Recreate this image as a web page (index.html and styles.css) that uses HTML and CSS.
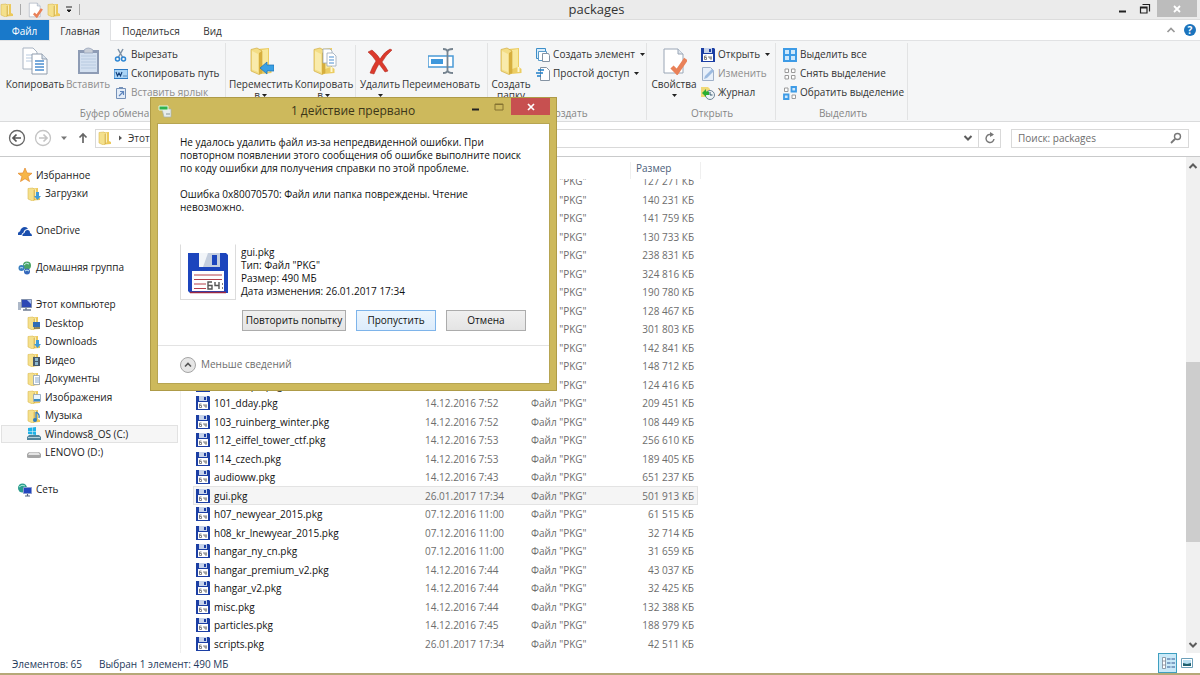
FILE: index.html
```
<!DOCTYPE html>
<html lang="ru">
<head>
<meta charset="utf-8">
<title>packages</title>
<link rel="stylesheet" href="styles.css">
</head>
<body>
<svg class="defs" aria-hidden="true">
  <symbol id="folder" viewBox="0 0 14 14">
    <path d="M5 1.500l6-.5v9l2 1v2l-7 .5z" fill="#ecc95c"/><path d="M1 1.500L6 1l1.500 1.500V13l-2 1L1 12z" fill="#f4e08c" stroke="#dcbb52" stroke-width=".6"/><path d="M7.500 2.500L9 2v9l-1.500 1.500z" fill="#f9efb9"/><path d="M7.200 3v10" stroke="#c99f30" stroke-width=".7"/>
  </symbol>
  <symbol id="bigfolder" viewBox="0 0 26 28">
    <path d="M9 2l12-1v19l2.500 2v4L13 27z" fill="#eccd63"/><path d="M14 3l6-1v18l-6 2z" fill="#f8e89a"/><path d="M3 2.500L9 1l5 3v22l-3 1.500L3 24z" fill="#f3dd85" stroke="#d3ae43" stroke-width=".7"/><path d="M11 6l3-2v22l-3 1.500z" fill="#d6ae3d"/><path d="M4 4l6 3v18l-6-2.500z" fill="#f9ebab"/><path d="M19.500 20h2v5h-2z" fill="#fff6cf"/>
  </symbol>
  <symbol id="floppy" viewBox="0 0 14 14">
    <path d="M0 0h13l1 1v13H0z" fill="#1c3fa4"/><path d="M3 0h8v5H3z" fill="#c7d3ea"/><path d="M8 1h2v3H8z" fill="#1c3fa4"/><path d="M2 6h10v7H2z" fill="#fff"/><path d="M5.500 8H3.500v3.500h2v-2h-2M8 8v2h3M10 8v4" fill="none" stroke="#666" stroke-width=".8"/>
  </symbol>
  <symbol id="check" viewBox="0 0 26 28">
    <path d="M3 2h14l5 5v19H3z" fill="#fff" stroke="#9aa6b6"/><path d="M17 2v5h5" fill="#dfe6ee" stroke="#9aa6b6"/><path d="M11 20l5 5 9-13" fill="none" stroke="#e98158" stroke-width="4.500"/>
  </symbol>
  <symbol id="caret" viewBox="0 0 7 5"><path d="M1 1h5L3.500 4z" fill="#222"/></symbol>
  <symbol id="up" viewBox="0 0 10 10"><path d="M1.500 7L5 3.500 8.500 7" fill="none" stroke="#5c5c5c" stroke-width="2"/></symbol>
  <symbol id="down" viewBox="0 0 10 10"><path d="M1.500 3L5 6.500 8.500 3" fill="none" stroke="#5c5c5c" stroke-width="2"/></symbol>
</svg>

<header class="titlebar">
  <div class="quick">
    <svg class="i14"><use href="#folder"/></svg><i class="bar"></i>
    <button aria-label="Свойства"><svg class="i16"><use href="#check"/></svg></button>
    <button aria-label="Новая папка"><svg class="i14"><use href="#folder"/></svg></button>
    <button aria-label="Настройка панели"><svg class="i8" viewBox="0 0 8 8"><path d="M1 1h6M2 4h4L4 6z" fill="#222" stroke="#222"/></svg></button><i class="bar"></i>
  </div>
  <h1>packages</h1>
  <div class="winbtns">
    <button aria-label="Свернуть"><svg viewBox="0 0 12 12" class="i12"><path d="M3 8.500h7" stroke="#222" stroke-width="2"/></svg></button>
    <button aria-label="Восстановить"><svg viewBox="0 0 12 12" class="i12"><path d="M1.500 4h6.500v6H1.500zM1.500 5H8M3.500 1.500h7v7" fill="none" stroke="#222" stroke-width="1.200"/></svg></button>
    <button class="close" aria-label="Закрыть"><svg viewBox="0 0 12 12" class="i12"><path d="M3 3l6 6M9 3L3 9" stroke="#fff" stroke-width="1.800"/></svg></button>
  </div>
</header>

<nav class="tabs">
  <button class="file">Файл</button><button class="active">Главная</button><button class="t3">Поделиться</button><button class="t4">Вид</button>
  <div class="tabend">
    <button aria-label="Свернуть ленту"><svg class="i10" viewBox="0 0 10 10"><path d="M1.500 7L5 3.500 8.500 7" fill="none" stroke="#999" stroke-width="1.700"/></svg></button>
    <button aria-label="Справка" class="help">?</button>
  </div>
</nav>

<section class="ribbon">
  <div class="group clip">
    <div class="tools">
      <button class="big w62"><svg class="ico" viewBox="0 0 26 28"><path d="M1 1h10l4 4v17H1z" fill="#fff" stroke="#a9b4c2"/><path d="M4 8h6M4 11h6M4 14h6" stroke="#b9cbe0"/><path d="M10 7h10l5 5v15H10z" fill="#fff" stroke="#8f9cad"/><path d="M20 7v5h5" fill="#dbe4ee" stroke="#8f9cad"/><path d="M13 14h9M13 17h9M13 20h9M13 23h9" stroke="#4c8fd0" stroke-width="1.400"/></svg><span>Копировать</span></button>
      <button class="big w44 dim"><svg class="ico" viewBox="0 0 26 28"><path d="M3 3h21v24H3z" fill="#8e9cb5"/><path d="M5 6h17v19H5z" fill="#d3e0f0"/><path d="M6 9h15M6 12h15M6 15h15M6 18h15M6 21h15" stroke="#b3c5dc" stroke-width=".8"/><path d="M9 3q4-4 9 0v3H9z" fill="#c8ced8" stroke="#8e9cb5" stroke-width=".7"/></svg><span>Вставить</span></button>
      <div class="small">
        <button><svg class="i14" viewBox="0 0 14 14"><path d="M4 1l5 9M9 1L4 10" stroke="#7e91a6" stroke-width="1.500"/><circle cx="3.500" cy="11" r="2" fill="none" stroke="#2d86d4" stroke-width="1.500"/><circle cx="9.500" cy="11" r="2" fill="none" stroke="#2d86d4" stroke-width="1.500"/></svg>Вырезать</button>
        <button><svg class="i14" viewBox="0 0 14 14"><path d="M0 2.500h14v9H0z" fill="#a9d4f7" stroke="#2b78c2"/><path d="M2 5l1.500 4L5 6l1.500 3L8 5M9.500 9h1M11.500 9h1" stroke="#123d77" fill="none" stroke-width="1.100"/></svg>Скопировать путь</button>
        <button class="dim"><svg class="i14" viewBox="0 0 14 14"><path d="M2.500 2.500h9v10h-9z" fill="#e4edf8" stroke="#7591b8"/><path d="M5 1h4v2H5z" fill="#7591b8"/><path d="M5 10l4-4M6 5.500h3.500V9" fill="none" stroke="#5f86bd" stroke-width="1.200"/></svg>Вставить ярлык</button>
      </div>
    </div>
    <h2>Буфер обмена</h2>
  </div>
  <div class="group org">
    <div class="tools">
      <button class="big w68"><svg class="ico" viewBox="0 0 26 28"><use href="#bigfolder" width="26" height="28"/><path d="M12 21l7-6v3h7v6h-7v3z" fill="#39a0e4" stroke="#1b6eb2" stroke-width=".7"/></svg><span>Переместить</span><span>в <svg class="car"><use href="#caret"/></svg></span></button>
      <button class="big w58"><svg class="ico" viewBox="0 0 26 28"><use href="#bigfolder" width="26" height="28"/><path d="M12 2h7l2 2v12h-9z" fill="#fff" stroke="#9ba8b8" stroke-width=".8"/><path d="M16 6h6l3 3v10h-9z" fill="#fff" stroke="#9ba8b8" stroke-width=".8"/><path d="M18 10h5M18 13h5M18 16h5" stroke="#4c8fd0"/></svg><span>Копировать</span><span>в <svg class="car"><use href="#caret"/></svg></span></button>
      <i class="split"></i>
      <button class="big w44"><svg class="ico" viewBox="0 0 26 28"><path d="M1 5l4-2q6 5 8 9 4-7 10-10l2 1q-6 5-10 12 4 5 6 9l-3 1q-3-4-6-8-3 5-5 10l-4-1q2-6 6-12-3-5-8-9z" fill="#dc3a2c" stroke="#a9271d" stroke-width=".5"/></svg><span>Удалить</span><span><svg class="car"><use href="#caret"/></svg></span></button>
      <button class="big w78"><svg class="ico" viewBox="0 0 26 28"><path d="M0 9h25v11H0z" fill="#fff" stroke="#4b9ad6" stroke-width="1.500"/><path d="M3 12h12v5H3z" fill="#3f98dc"/><path d="M15 2q4.500 0 4.500 3v18q0 3-4.500 3M25 2q-5.500 0-5.500 3v18q0 3 5.500 3" fill="none" stroke="#75838f" stroke-width="1.800"/></svg><span>Переименовать</span></button>
    </div>
    <h2>Упорядочить</h2>
  </div>
  <div class="group new">
    <div class="tools">
      <button class="big w44"><svg class="ico"><use href="#bigfolder"/></svg><span>Создать</span><span>папку</span></button>
      <div class="small">
        <button><svg class="i14" viewBox="0 0 14 14"><path d="M.5.5h9v10h-9z" fill="#d9edfb" stroke="#3c8ec9"/><path d="M2.500 3.500h8v9h-8z" fill="#fff" stroke="#5a9bc9"/><path d="M6.500 5.500h6l1 2v6h-7z" fill="#fff" stroke="#8593a3"/></svg>Создать элемент<svg class="car"><use href="#caret"/></svg></button>
        <button><svg class="i14" viewBox="0 0 14 14"><path d="M4.500.5h6l3 3v10h-9z" fill="#fff" stroke="#8593a3"/><path d="M2 3h6M0 6h7M1 9h4" stroke="#1f7fc9" stroke-width="1.400"/></svg>Простой доступ<svg class="car"><use href="#caret"/></svg></button>
      </div>
    </div>
    <h2>Создать</h2>
  </div>
  <div class="group open">
    <div class="tools">
      <button class="big w50"><svg class="ico"><use href="#check"/></svg><span>Свойства</span><span><svg class="car"><use href="#caret"/></svg></span></button>
      <div class="small">
        <button><svg class="i14"><use href="#floppy"/></svg>Открыть<svg class="car"><use href="#caret"/></svg></button>
        <button class="dim"><svg class="i14" viewBox="0 0 14 14"><path d="M1.500.5h8l3 3v10h-11z" fill="#e8f0fa" stroke="#9fb0c8"/><path d="M3 12l1-3 7-7 2 2-7 7z" fill="#9dbbe0"/></svg>Изменить</button>
        <button><svg class="i14" viewBox="0 0 14 14"><path d="M0 1h7l2 2v8H0z" fill="#f0d977"/><circle cx="9" cy="9" r="4.500" fill="#eef4f6" stroke="#6e8496"/><path d="M9 6v3h2.500" fill="none" stroke="#35566e"/><path d="M1 7l4-4v2.500h3V9H5v2z" fill="#2bae33"/></svg>Журнал</button>
      </div>
    </div>
    <h2>Открыть</h2>
  </div>
  <div class="group sel">
    <div class="tools">
      <div class="small">
        <button><svg class="i14" viewBox="0 0 14 14"><path d="M0 0h14v14H0z" fill="#3d9be6"/><path d="M2 2h4v4H2zM8 2h4v4H8zM2 8h4v4H2zM8 8h4v4H8z" fill="#cfe8fb"/></svg>Выделить все</button>
        <button><svg class="i14" viewBox="0 0 14 14"><path d="M2 2h3.500v3.500H2zM8.500 2H12v3.500H8.500zM2 8.500h3.500V12H2zM8.500 8.500H12V12H8.500z" fill="#fff" stroke="#9a9a9a"/></svg>Снять выделение</button>
        <button><svg class="i14" viewBox="0 0 14 14"><path d="M8.500 1H13v4.500H8.500zM1 8.500h4.500V13H1z" fill="#cfe8fb" stroke="#3d9be6" stroke-width="1.800"/><path d="M1.500 2H5v3.500H1.500zM9 9h3.500v3.500H9z" fill="#fff" stroke="#9a9a9a"/></svg>Обратить выделение</button>
      </div>
    </div>
    <h2>Выделить</h2>
  </div>
</section>

<section class="address">
  <button aria-label="Назад"><svg class="i18" viewBox="0 0 18 18"><circle cx="9" cy="9" r="7.500" fill="#fff" stroke="#666" stroke-width="1.300"/><path d="M13 9H6M8.500 5.500L5 9l3.500 3.500" fill="none" stroke="#555" stroke-width="1.700"/></svg></button>
  <button aria-label="Вперед"><svg class="i18" viewBox="0 0 18 18"><circle cx="9" cy="9" r="7.500" fill="#fff" stroke="#c4c4c4" stroke-width="1.300"/><path d="M5 9h7M9.500 5.500L13 9l-3.500 3.500" fill="none" stroke="#c4c4c4" stroke-width="1.700"/></svg></button>
  <button aria-label="Последние"><svg class="i8" viewBox="0 0 8 8"><path d="M1 2.500h6L4 6z" fill="#777"/></svg></button>
  <button aria-label="Вверх" class="upbtn"><svg class="i12" viewBox="0 0 12 12"><path d="M6 11V2M2.500 5.500L6 2l3.500 3.500" fill="none" stroke="#666" stroke-width="1.700"/></svg></button>
  <div class="path">
    <svg class="i14"><use href="#folder"/></svg>
    <svg class="i8" viewBox="0 0 8 8"><path d="M3 1.500L6 4 3 6.500z" fill="#555"/></svg>
    <a href="#pc">Этот компьютер</a>
    <button class="drop" aria-label="Показать адреса"><svg class="i10"><use href="#down"/></svg></button>
    <button class="refresh" aria-label="Обновить"><svg class="i12" viewBox="0 0 12 12"><path d="M8.500 3.300A4 4 0 1 0 10 7" fill="none" stroke="#777" stroke-width="1.400"/><path d="M6 0l4 2.500L6 5z" fill="#777"/></svg></button>
  </div>
  <label class="search"><input type="text" placeholder="Поиск: packages" aria-label="Поиск: packages"><svg class="i12" viewBox="0 0 12 12"><circle cx="7.500" cy="4.500" r="3" fill="none" stroke="#777" stroke-width="1.400"/><path d="M5 7l-4 4" stroke="#777" stroke-width="1.800"/></svg></label>
</section>

<main class="content">
  <aside class="tree">
    <ul>
      <li><svg class="i14" viewBox="0 0 14 14"><path d="M7 0l2 5 5 .3-4 3.200 1.500 5L7 10.700l-4.500 2.800 1.500-5L0 5.300 5 5z" fill="#f7b649" stroke="#e28a2b" stroke-width=".7"/></svg>Избранное</li>
      <li class="sub"><svg class="i14" viewBox="0 0 14 14"><use href="#folder" width="14" height="14"/><path d="M9 5h3v4h2l-3.500 4L7 9h2z" fill="#3e9bd8"/></svg>Загрузки</li>
      <li></li>
      <li><svg class="i14" viewBox="0 0 14 14"><path d="M0 11q-.5-3 2-3.500Q3 3 7 3q2 0 3 2-4 0-4.500 3.500Q3.500 9 3.500 11z" fill="#1a4fae"/><path d="M4.500 12Q4 9.500 6.500 9 7 6 9.500 6 12 6 12 9q2 .5 2 3z" fill="#1a4fae"/></svg>OneDrive</li>
      <li></li>
      <li><svg class="i14" viewBox="0 0 14 14"><circle cx="9" cy="4.500" r="4" fill="#4aa564"/><circle cx="3.500" cy="7" r="3" fill="#3a7fc0"/><circle cx="9" cy="10.500" r="3" fill="#3467bb"/><path d="M6 4q2-3 5-1M2 7q2-1 3 0M7 10q2-2 4 0" stroke="#c9edf3" fill="none"/></svg>Домашняя группа</li>
      <li></li>
      <li id="pc"><svg class="i14" viewBox="0 0 14 14"><path d="M0 4h3v8H0z" fill="#adb8c8"/><path d="M3.500 1.500h10v8h-10z" fill="#2c47b4" stroke="#8290ac"/><path d="M9 2h4v4z" fill="#a9c2f2"/><path d="M5 12h8M8 10v2" stroke="#6f7c92" stroke-width="1.500"/></svg>Этот компьютер</li>
      <li class="sub"><svg class="i14" viewBox="0 0 14 14"><use href="#folder" width="14" height="14"/><path d="M6 6h7v5H6z" fill="#2e6cb5"/><path d="M7 12h6" stroke="#345"/></svg>Desktop</li>
      <li class="sub"><svg class="i14" viewBox="0 0 14 14"><use href="#folder" width="14" height="14"/><path d="M9 5h3v4h2l-3.500 4L7 9h2z" fill="#3e9bd8"/></svg>Downloads</li>
      <li class="sub"><svg class="i14" viewBox="0 0 14 14"><use href="#folder" width="14" height="14"/><path d="M6 4h7v9H6z" fill="#46586a"/><path d="M8 5h3v3H8zM8 9h3v3H8z" fill="#8db7cc"/></svg>Видео</li>
      <li class="sub"><svg class="i14" viewBox="0 0 14 14"><use href="#folder" width="14" height="14"/><path d="M6.500 3.500h6v9h-6z" fill="#fff" stroke="#8ca0b8" stroke-width=".8"/><path d="M8 6h4M8 8h4M8 10h4" stroke="#6b94c4" stroke-width=".8"/></svg>Документы</li>
      <li class="sub"><svg class="i14" viewBox="0 0 14 14"><use href="#folder" width="14" height="14"/><path d="M6.500 4.500h7v7h-7z" fill="#eaf5fc" stroke="#8ca0b8" stroke-width=".8"/><path d="M7 9h6v2H7z" fill="#3e8fc0"/></svg>Изображения</li>
      <li class="sub"><svg class="i14" viewBox="0 0 14 14"><use href="#folder" width="14" height="14"/><path d="M9 3v8M9 3q4 2 3 6" stroke="#2e7cc0" fill="none" stroke-width="1.300"/><circle cx="8" cy="11" r="2" fill="#2e7cc0"/></svg>Музыка</li>
      <li class="sub current"><svg class="i14" viewBox="0 0 14 14"><path d="M1 1l4-.5V4H1zM5.500.4L9 0v4H5.500zM1 4.500h4v3L1 7zM5.500 4.500H9V8l-3.500-.5z" fill="#1fb1e6"/><path d="M2 8h10l2 2v3H0v-3z" fill="#52849b"/><path d="M1 10.500h12" stroke="#b7d3de"/></svg>Windows8_OS (C:)</li>
      <li class="sub"><svg class="i14" viewBox="0 0 14 14"><path d="M2 6h10l2 2v3q0 1-2 1H2q-2 0-2-1V8z" fill="#a6a6a6"/><path d="M2.500 6.500h9L13 9H1z" fill="#e4e4e4"/></svg>LENOVO (D:)</li>
      <li></li>
      <li><svg class="i14" viewBox="0 0 14 14"><circle cx="4.500" cy="5" r="4.500" fill="#2b9d8e"/><path d="M1 4q3-3 6-1" stroke="#a8ecd6" fill="none"/><path d="M5.500 4.500h8v6h-8z" fill="#2346c0" stroke="#8b9bd0"/><path d="M7 13h5M9.500 11v2" stroke="#506080" stroke-width="1.200"/></svg>Сеть</li>
    </ul>
  </aside>
  <section class="files">
    <div class="head"><span>Размер</span></div>
    <table aria-label="Файлы">
      <colgroup><col class="cname"><col class="cdate"><col class="ctype"><col class="csize"></colgroup>
      <tbody>
      <tr><td></td><td></td><td>Файл "PKG"</td><td>127 271 КБ</td></tr>
      <tr><td></td><td></td><td>Файл "PKG"</td><td>140 231 КБ</td></tr>
      <tr><td></td><td></td><td>Файл "PKG"</td><td>141 759 КБ</td></tr>
      <tr><td></td><td></td><td>Файл "PKG"</td><td>130 733 КБ</td></tr>
      <tr><td></td><td></td><td>Файл "PKG"</td><td>238 831 КБ</td></tr>
      <tr><td></td><td></td><td>Файл "PKG"</td><td>324 816 КБ</td></tr>
      <tr><td></td><td></td><td>Файл "PKG"</td><td>190 780 КБ</td></tr>
      <tr><td></td><td></td><td>Файл "PKG"</td><td>128 467 КБ</td></tr>
      <tr><td></td><td></td><td>Файл "PKG"</td><td>301 803 КБ</td></tr>
      <tr><td></td><td></td><td>Файл "PKG"</td><td>142 841 КБ</td></tr>
      <tr><td></td><td></td><td>Файл "PKG"</td><td>148 712 КБ</td></tr>
      <tr><td><svg class="i14"><use href="#floppy"/></svg>100_thepit.pkg</td><td></td><td>Файл "PKG"</td><td>124 416 КБ</td></tr>
      <tr><td><svg class="i14"><use href="#floppy"/></svg>101_dday.pkg</td><td>14.12.2016 7:52</td><td>Файл "PKG"</td><td>209 451 КБ</td></tr>
      <tr><td><svg class="i14"><use href="#floppy"/></svg>103_ruinberg_winter.pkg</td><td>14.12.2016 7:52</td><td>Файл "PKG"</td><td>108 449 КБ</td></tr>
      <tr><td><svg class="i14"><use href="#floppy"/></svg>112_eiffel_tower_ctf.pkg</td><td>14.12.2016 7:53</td><td>Файл "PKG"</td><td>256 610 КБ</td></tr>
      <tr><td><svg class="i14"><use href="#floppy"/></svg>114_czech.pkg</td><td>14.12.2016 7:53</td><td>Файл "PKG"</td><td>189 405 КБ</td></tr>
      <tr><td><svg class="i14"><use href="#floppy"/></svg>audioww.pkg</td><td>14.12.2016 7:43</td><td>Файл "PKG"</td><td>651 237 КБ</td></tr>
      <tr class="current"><td><svg class="i14"><use href="#floppy"/></svg>gui.pkg</td><td>26.01.2017 17:34</td><td>Файл "PKG"</td><td>501 913 КБ</td></tr>
      <tr><td><svg class="i14"><use href="#floppy"/></svg>h07_newyear_2015.pkg</td><td>07.12.2016 11:00</td><td>Файл "PKG"</td><td>61 515 КБ</td></tr>
      <tr><td><svg class="i14"><use href="#floppy"/></svg>h08_kr_lnewyear_2015.pkg</td><td>07.12.2016 11:00</td><td>Файл "PKG"</td><td>32 714 КБ</td></tr>
      <tr><td><svg class="i14"><use href="#floppy"/></svg>hangar_ny_cn.pkg</td><td>07.12.2016 11:00</td><td>Файл "PKG"</td><td>31 659 КБ</td></tr>
      <tr><td><svg class="i14"><use href="#floppy"/></svg>hangar_premium_v2.pkg</td><td>14.12.2016 7:44</td><td>Файл "PKG"</td><td>43 037 КБ</td></tr>
      <tr><td><svg class="i14"><use href="#floppy"/></svg>hangar_v2.pkg</td><td>14.12.2016 7:44</td><td>Файл "PKG"</td><td>32 425 КБ</td></tr>
      <tr><td><svg class="i14"><use href="#floppy"/></svg>misc.pkg</td><td>14.12.2016 7:44</td><td>Файл "PKG"</td><td>132 388 КБ</td></tr>
      <tr><td><svg class="i14"><use href="#floppy"/></svg>particles.pkg</td><td>14.12.2016 7:45</td><td>Файл "PKG"</td><td>188 979 КБ</td></tr>
      <tr><td><svg class="i14"><use href="#floppy"/></svg>scripts.pkg</td><td>26.01.2017 17:34</td><td>Файл "PKG"</td><td>42 511 КБ</td></tr>
      </tbody>
    </table>
  </section>
  <div class="scroll">
    <button aria-label="Прокрутить вверх"><svg class="i10"><use href="#up"/></svg></button>
    <div class="track"><div class="thumb"></div></div>
    <button aria-label="Прокрутить вниз"><svg class="i10"><use href="#down"/></svg></button>
  </div>
</main>

<footer class="status">
  <span>Элементов: 65</span><span>Выбран 1 элемент: 490 МБ</span>
  <div class="views">
    <button class="on" aria-label="Таблица"><svg class="i14" viewBox="0 0 14 14"><path d="M1.500 1.500h3v11h-3zM1.500 5h3M1.500 9h3" fill="#fff" stroke="#7c8794" stroke-width=".8"/><path d="M6 3h3.500M10.500 3H14M6 7h3.500M10.500 7H14M6 11h3.500M10.500 11H14" stroke="#35598f" stroke-width="1.200"/></svg></button>
    <button aria-label="Крупные значки"><svg class="i14" viewBox="0 0 14 14"><path d="M1.500 2.500h11v9h-11z" fill="#fff" stroke="#6c9fb9"/><path d="M3 4h8v6H3z" fill="#b9e0f2"/><path d="M3 7l4 1 4-1v3H3z" fill="#1f6170"/></svg></button>
  </div>
</footer>

<section class="dialog" role="dialog" aria-labelledby="dt">
  <header>
    <svg class="i14" viewBox="0 0 14 14"><path d="M4 5h9v8H6z" fill="#e7ecec" stroke="#a7b3b0" stroke-width=".7"/><path d="M1 2h9v4H1z" fill="#2fb24c" stroke="#e4f5e2"/><path d="M8 10h4" stroke="#899"/></svg>
    <h2 id="dt">1 действие прервано</h2>
    <div class="dbtns">
      <button aria-label="Свернуть"><svg class="i12" viewBox="0 0 12 12"><path d="M3 8.500h7" stroke="#222" stroke-width="2"/></svg></button>
      <button aria-label="Развернуть" disabled><svg class="i12" viewBox="0 0 12 12"><path d="M2 3h8v6H2zM2 3.500h8" fill="none" stroke="#857331"/></svg></button>
      <button class="red" aria-label="Закрыть"><svg class="i12" viewBox="0 0 12 12"><path d="M3 3l6 6M9 3L3 9" stroke="#fff" stroke-width="1.700"/></svg></button>
    </div>
  </header>
  <div class="pane">
    <div class="body">
      <p>Не удалось удалить файл из-за непредвиденной ошибки. При<br>повторном появлении этого сообщения об ошибке выполните поиск<br>по коду ошибки для получения справки по этой проблеме.</p>
      <p>Ошибка 0x80070570: Файл или папка повреждены. Чтение<br>невозможно.</p>
      <div class="item">
        <div class="thumbnail"><svg viewBox="0 0 42 42"><path d="M1 1h38l2 2v38H3l-2-2z" fill="#1c45bd"/><path d="M12 1h21v14H12z" fill="#c4cede"/><path d="M12 1h9l-5 14h-4z" fill="#f2f5f9"/><path d="M25 3h5v10h-5z" fill="#1c45bd"/><path d="M5 19h32v20H5z" fill="#fff"/><path d="M7 23h28M7 27.500h28M7 32h12M7 36.500h12" stroke="#b5404b"/><path d="M3 40.500h36" stroke="#9d2842" stroke-width="1.500"/><path d="M25 30h-4v7h4v-3.500h-4M28 30v3.500h4M32 30v7M35 32h1M35 36h1" fill="none" stroke="#555" stroke-width="1.400"/></svg></div>
        <dl><dd>gui.pkg</dd><dd>Тип: Файл "PKG"</dd><dd>Размер: 490 МБ</dd><dd>Дата изменения: 26.01.2017 17:34</dd></dl>
      </div>
      <div class="actions"><button class="retry">Повторить попытку</button><button class="primary">Пропустить</button><button>Отмена</button></div>
    </div>
    <button class="less"><svg class="i16" viewBox="0 0 16 16"><circle cx="8" cy="8" r="7.500" fill="#e6e6e6" stroke="#a5a5a5"/><path d="M5 9.500L8 6.500l3 3" fill="none" stroke="#555" stroke-width="1.600"/></svg>Меньше сведений</button>
  </div>
</section>
</body>
</html>
```
FILE: styles.css
```
* { box-sizing: border-box; }
html, body { height: 100%; }
body {
  margin: 0;
  display: flex;
  flex-direction: column;
  overflow: hidden;
  background: #fff;
  border-bottom: 2px solid #b5a878;
  color: #333;
  font: 10px/13px "Open Sans", "Noto Sans", sans-serif;
}
button {
  display: flex;
  align-items: center;
  padding: 0;
  border: 0;
  background: none;
  color: inherit;
  font: inherit;
  white-space: nowrap;
}
h1, h2, p, ul, dl, dd { margin: 0; padding: 0; font-weight: 400; }
ul { list-style: none; }
svg { flex: none; display: block; }
.defs { display: none; }
.i8 { width: 8px; height: 8px; }
.i10 { width: 10px; height: 10px; }
.i12 { width: 12px; height: 12px; }
.i14 { width: 14px; height: 14px; }
.i16 { width: 16px; height: 16px; }
.i18 { width: 18px; height: 18px; }
.car { width: 7px; height: 5px; margin-left: 1px; }

.titlebar {
  display: grid;
  grid-template-columns: 1fr auto 1fr;
  align-items: center;
  height: 20px;
  flex: none;
  background: #ebebeb;
  border-bottom: 1px solid #dcdcdc;
}
.titlebar h1 { padding-right: 7px; font-size: 13px; line-height: 19px; }
.quick { display: flex; align-items: center; gap: 4px; }
.bar { width: 1px; height: 11px; margin: 0 2px; background: #aaa; }
.winbtns { display: flex; justify-content: flex-end; align-items: flex-start; height: 100%; padding-right: 3px; }
.winbtns button { width: 23px; height: 17px; justify-content: center; }
.winbtns .close { width: 40px; margin-left: 1px; background: #bcbcbc; }

.tabs { display: flex; height: 21px; flex: none; border-bottom: 1px solid #e1e2e4; }
.tabs > button { justify-content: center; height: 21px; padding-top: 2px; }
.tabs .file { width: 49px; height: 20px; background: #1979ca; color: #fff; }
.tabs .active { width: 62px; background: #f5f6f7; border: 1px solid #dfe0e2; border-width: 0 1px; }
.tabs .t3 { width: 80px; }
.tabs .t4 { width: 43px; }
.tabend { display: flex; align-items: center; gap: 8px; margin-left: auto; padding-right: 4px; }
.help { width: 12px; height: 12px; justify-content: center; border-radius: 50%; background: #1c74bd; color: #fff; font-weight: 700; }

.ribbon { display: flex; height: 81px; flex: none; background: #f5f6f7; border-bottom: 1px solid #dadbdc; }
.group { display: flex; flex-direction: column; justify-content: space-between; margin: 2px 0 1px; border-right: 1px solid #e2e3e4; }
.group h2 { font-size: 10px; line-height: 14px; text-align: center; color: #868686; }
.tools { display: flex; height: 63px; padding-top: 2px; }
.clip { width: 226px; padding-left: 4px; }
.org { width: 262px; padding-left: 1px; }
.new { width: 159px; padding-left: 2px; }
.open { width: 129px; padding-left: 2px; }
.sel { width: 132px; padding-left: 3px; }
.big { flex-direction: column; align-self: flex-start; padding-top: 2px; line-height: 11px; }
.big .ico { width: 26px; height: 28px; margin-bottom: 4px; }
.big span { display: flex; align-items: center; min-height: 11px; }
.w44 { width: 44px; }
.w50 { width: 50px; }
.w58 { width: 58px; }
.w62 { width: 62px; }
.w68 { width: 68px; }
.w78 { width: 78px; }
.split { width: 1px; height: 70px; margin: 0 2px; background: #e2e3e4; }
.small { padding-left: 4px; }
.open .small { padding-left: 2px; }
.small button { height: 19px; gap: 3px; }
.dim { color: #8d8d8d; }

.address { display: flex; align-items: center; height: 35px; flex: none; padding: 0 11px 2px 8px; border-bottom: 1px solid #c9cacb; gap: 8px; }
.upbtn { margin-left: 1px; }
.path { display: flex; flex: 1; align-items: center; gap: 4px; height: 19px; margin-left: -2px; padding-left: 2px; border: 1px solid #d9d9d9; }
.path a { color: #333; text-decoration: none; }
.drop { margin-left: auto; margin-right: 1px; }
.refresh { width: 22px; height: 17px; justify-content: center; border-left: 1px solid #d9d9d9; }
.search { display: flex; align-items: center; width: 178px; height: 19px; margin-left: 2px; padding: 0 6px; border: 1px solid #d9d9d9; }
.search input { flex: 1; min-width: 0; padding: 0; border: 0; outline: 0; font: inherit; }
.search input::placeholder { color: #6d6d6d; opacity: 1; }

.content { display: flex; flex: 1; min-height: 0; }
.tree { width: 181px; flex: none; padding-top: 9px; border-right: 1px solid #f0f0f0; overflow: hidden; color: #222; }
.tree li { display: flex; align-items: center; gap: 4px; height: 18px; margin: 0 2px 0 1px; padding-left: 16px; border: 1px solid transparent; }
.tree li:nth-child(even) { height: 19px; }
.tree .sub { padding-left: 25px; }
.tree .current { background: #f6f6f6; border-color: #e2e2e2; }
.files { flex: 1; overflow: hidden; padding-left: 12px; }
.head { position: relative; width: 508px; height: 22px; padding: 5px 0 0 437px; background: #fff; color: #4c607a; }
.head span { display: block; height: 17px; padding-left: 5px; border: 1px solid #efefef; border-width: 0 1px; }
.files table { width: 505px; margin-top: -7px; table-layout: fixed; border-collapse: collapse; color: #6d6d6d; }
.cname { width: 232px; }
.cdate { width: 106px; }
.ctype { width: 94px; }
.csize { width: 73px; }
.files tr { height: 18px; }
.files tr:nth-child(even) { height: 19px; }
.files td { padding: 0; line-height: 14px; white-space: nowrap; }
.files td:first-child { padding-left: 3px; color: #111; }
.files td:last-child { padding-right: 4px; text-align: right; }
.files td svg { display: inline-block; margin-right: 4px; vertical-align: top; }
.files .current { background: #f5f5f5; outline: 1px solid #e3e3e3; outline-offset: -1px; }
.scroll { display: flex; flex-direction: column; width: 14px; background: #f0f0f0; }
.scroll button { height: 17px; justify-content: center; }
.track { display: flex; flex: 1; flex-direction: column; justify-content: flex-end; padding-bottom: 94px; }
.thumb { height: 49%; min-height: 40px; background: #cdcdcd; }

.status { display: flex; align-items: center; height: 20px; flex: none; gap: 17px; padding-left: 12px; color: #1e395b; }
.status span { padding-top: 2px; }
.views { display: flex; margin-left: auto; padding-right: 4px; }
.views button { width: 19px; height: 20px; justify-content: center; }
.views .on { border: 1px solid #3f9fc0; background: #c9e9f8; }

.dialog { position: absolute; left: 150px; top: 97px; width: 407px; padding: 0 6px 6px; background: #cdb95c; border: 1px solid #ae9b48; color: #111; }
.dialog > header { display: grid; grid-template-columns: 1fr auto 1fr; align-items: center; height: 25px; padding-left: 1px; }
.dialog h2 { padding-right: 2px; font-size: 12px; line-height: 16px; color: #3b3518; }
.dbtns { display: flex; justify-content: flex-end; align-items: flex-start; height: 100%; }
.dbtns button { width: 24px; height: 17px; justify-content: center; }
.dbtns .red { width: 39px; background: #c75050; }
.pane { background: #fff; border: 1px solid #b7a552; }
.body { padding: 12px 23px 14px 22px; }
.body p { margin-bottom: 13px; white-space: nowrap; }
.item { display: flex; align-items: center; gap: 5px; margin-top: 30px; }
.thumbnail { width: 56px; height: 56px; padding: 7px 6px; border: 1px solid #dcdcdc; border-top-color: #fff; }
.thumbnail svg { width: 42px; height: 42px; }
.actions { display: flex; justify-content: flex-end; gap: 10px; margin-top: 10px; }
.actions button { width: 80px; height: 21px; justify-content: center; border: 1px solid #acacac; background: linear-gradient(#f0f0f0, #e4e4e4); }
.actions .retry { width: 104px; }
.actions .primary { border-color: #7eb4ea; background: linear-gradient(#ecf5fd, #dcecfc); }
.less { width: 100%; height: 38px; gap: 5px; padding-left: 22px; border-top: 1px solid #e3e3e3; color: #6d6d6d; }
```
